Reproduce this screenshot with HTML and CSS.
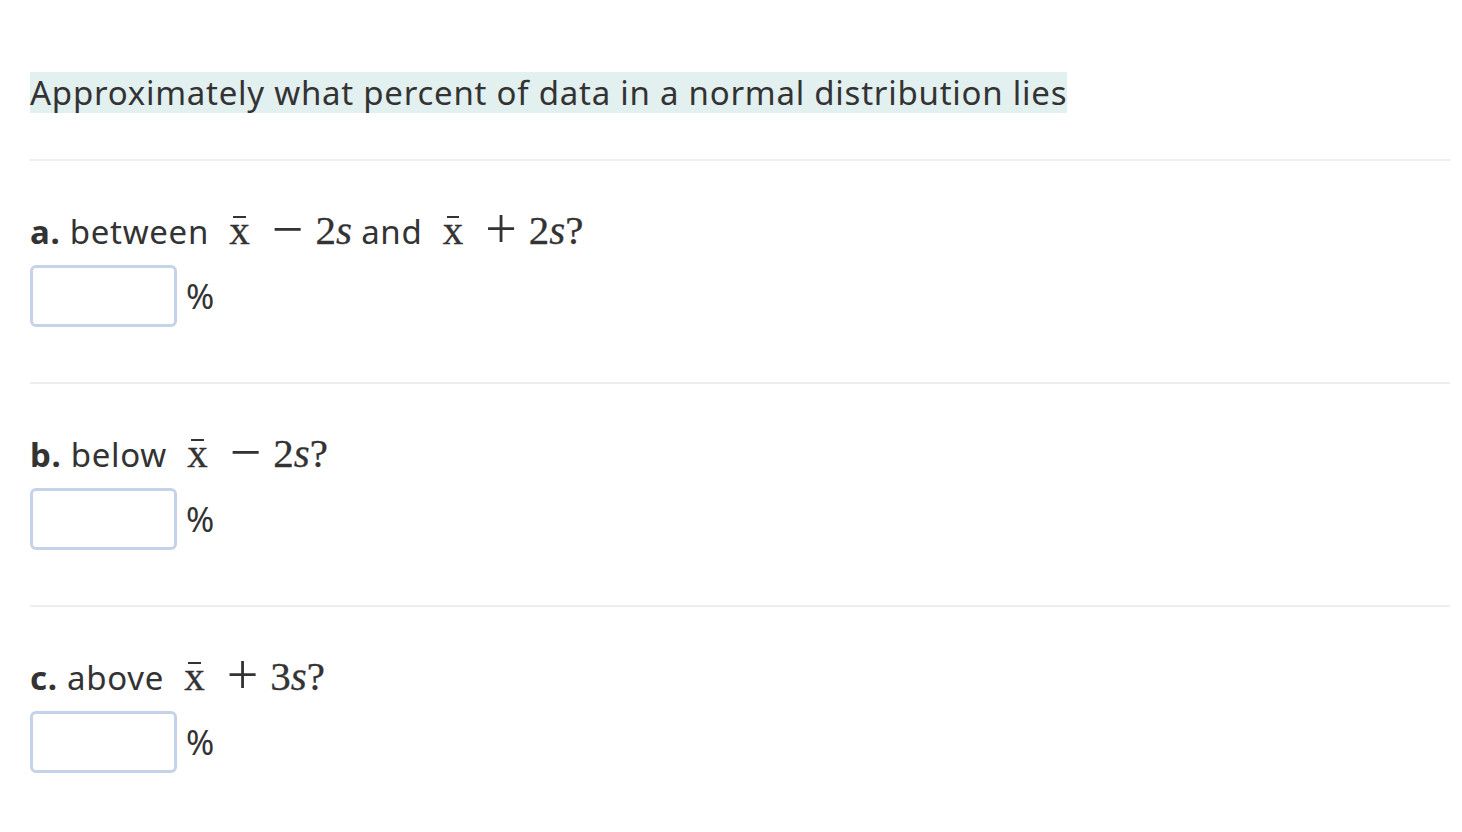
FILE: index.html
```html
<!DOCTYPE html>
<html>
<head>
<meta charset="utf-8">
<link rel="stylesheet" href="styles.css">
</head>
<body>
<div class="page">
  <div class="intro"><span class="hl">Approximately what percent of data in a normal distribution lies</span></div>
  <div class="part">
    <div class="q"><b>a.</b> between <span class="m"><span class="xbar">x</span><span class="op">−</span>2<i>s</i></span> and <span class="m"><span class="xbar">x</span><span class="op">+</span>2<i>s</i>?</span></div>
    <div class="ans"><span class="box"></span><span class="pct">%</span></div>
  </div>
  <div class="part">
    <div class="q"><b>b.</b> below <span class="m"><span class="xbar">x</span><span class="op">−</span>2<i>s</i>?</span></div>
    <div class="ans"><span class="box"></span><span class="pct">%</span></div>
  </div>
  <div class="part">
    <div class="q"><b>c.</b> above <span class="m"><span class="xbar">x</span><span class="op">+</span>3<i>s</i>?</span></div>
    <div class="ans"><span class="box"></span><span class="pct">%</span></div>
  </div>
</div>
</body>
</html>
```
FILE: styles.css
```css
html, body { margin: 0; padding: 0; background: #fff; }
body { font-family: "Noto Sans", "Open Sans", sans-serif; color: #333; }
.page { padding: 72px 12px 0 30px; }
.intro { font-size: 33px; letter-spacing: 0.75px; line-height: 41px; padding-bottom: 46px; border-bottom: 2px solid #eeeeee; }
.hl { background: #e3f0f0; display: inline-block; }
.part { padding-top: 47px; padding-bottom: 55px; border-bottom: 2px solid #eeeeee; }
.part:last-child { border-bottom: none; }
.q { font-size: 33px; letter-spacing: 0.7px; line-height: 44px; height: 44px; white-space: nowrap; }
.q b { font-weight: 700; }
.m { font-family: "Liberation Serif", "DejaVu Serif", serif; font-size: 41px; letter-spacing: 0; margin-left: 11px; -webkit-text-stroke: 0.3px #333; }
.xbar { position: relative; display: inline-block; font-size: 41px; line-height: 1; vertical-align: baseline; }
.xbar::before { content: ""; position: absolute; left: 4px; right: 4px; top: 6px; height: 2px; background: #333; }
.op { display: inline-block; font-size: 56px; line-height: 0; vertical-align: -4px; margin: 0 12px 0 22px; -webkit-text-stroke: 0; }
.m i { font-style: italic; }
.ans { display: flex; align-items: center; margin-top: 13px; }
.box { width: 141px; height: 56px; border: 3px solid #c4d3ea; border-radius: 6px; background: #fff; }
.pct { font-size: 34px; margin-left: 9px; }
```
